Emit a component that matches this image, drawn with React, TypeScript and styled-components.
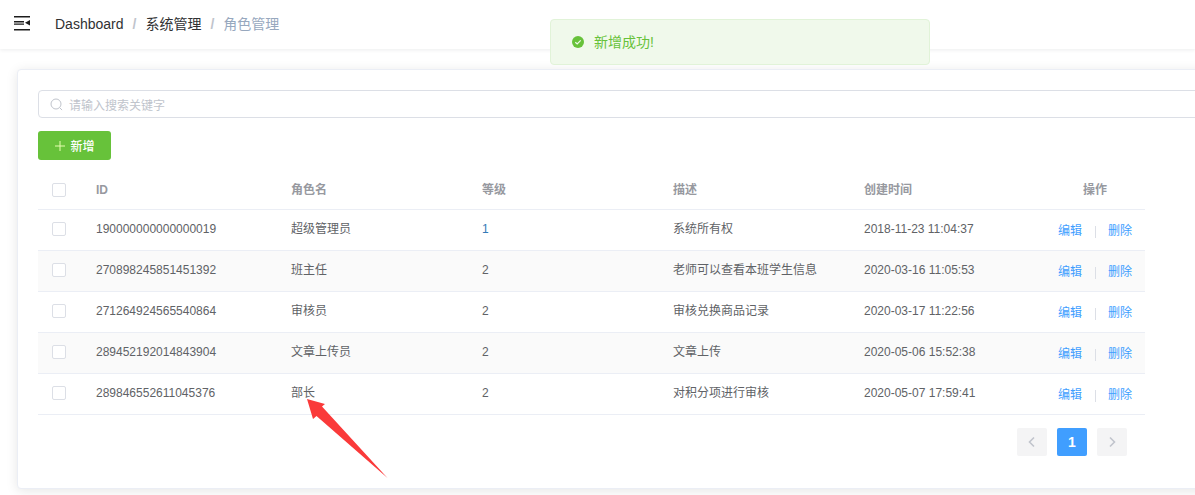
import React from 'react';
import styled, { createGlobalStyle } from 'styled-components';

const Global = createGlobalStyle`
  html, body { margin: 0; padding: 0; background: #fff; overflow: hidden; }
  body { font-family: "Liberation Sans", "Noto Sans CJK SC", sans-serif; width: 1195px; height: 495px; }
  * { box-sizing: border-box; }
`;

const Page = styled.div`
  position: relative;
  width: 1195px;
  height: 495px;
  overflow: hidden;
`;

const Navbar = styled.header`
  height: 49px;
  display: flex;
  align-items: center;
  padding-left: 14px;
  background: #fff;
  box-shadow: 0 1px 4px rgba(0, 21, 41, 0.08);
`;

const Hamburger = styled.svg`
  width: 16px;
  height: 16px;
  margin-right: 25px;
  margin-top: -1px;
  flex: none;
`;

const Crumbs = styled.nav`
  display: flex;
  align-items: center;
  font-size: 14px;
  line-height: 1;
  margin-top: -1px;
`;

const Crumb = styled.span<{ $last?: boolean }>`
  color: ${(p) => (p.$last ? '#97a8be' : '#303133')};
`;

const Sep = styled.span`
  color: #c0c4cc;
  margin: 0 9px;
  font-weight: 700;
`;

const Main = styled.main`
  padding: 21px 0 0 18px;
`;

const Card = styled.section`
  width: 1300px;
  height: 420px;
  padding: 20px;
  background: #fff;
  border: 1px solid #ebeef5;
  border-radius: 4px;
  box-shadow: 0 2px 12px rgba(0, 0, 0, 0.1);
  margin-left: -1px;
  margin-top: -1px;
`;

const Search = styled.div`
  height: 28px;
  display: flex;
  align-items: center;
  gap: 6px;
  padding-left: 11px;
  border: 1px solid #dcdfe6;
  border-radius: 4px;
  font-size: 12px;
  color: #c0c4cc;
`;

const AddButton = styled.button`
  display: flex;
  align-items: center;
  justify-content: center;
  gap: 4px;
  width: 73px;
  height: 29px;
  margin-top: 13px;
  border: 0;
  padding: 0;
  border-radius: 3px;
  background: #67c23a;
  color: #fff;
  font: 500 12px "Liberation Sans", "Noto Sans CJK SC", sans-serif;
`;

const Table = styled.div`
  width: 1107px;
  margin-top: 10px;
`;

const Row = styled.div<{ $striped?: boolean }>`
  display: grid;
  grid-template-columns: 48px 195px 191px 191px 191px 191px 100px;
  align-items: center;
  height: 41px;
  border-bottom: 1px solid #ebeef5;
  background: ${(p) => (p.$striped ? '#fafafa' : '#fff')};
  font-size: 12px;
  line-height: 16px;
  color: #606266;
`;

const HeadRow = styled(Row)`
  height: 40px;
  font-weight: 700;
  color: #97999f;
`;

const HeadCell = styled.div<{ $center?: boolean }>`
  padding: 0 10px;
  text-align: ${(p) => (p.$center ? 'center' : 'left')};
`;

const Cell = styled.div<{ $link?: boolean }>`
  padding: 0 10px;
  margin-top: -3px;
  white-space: nowrap;
  color: ${(p) => (p.$link ? '#337ab7' : 'inherit')};
`;

const CheckCell = styled.div<{ $raised?: boolean }>`
  display: flex;
  padding-left: 14px;
  margin-top: ${(p) => (p.$raised ? '-2px' : '0')};
`;

const Check = styled.span`
  width: 14px;
  height: 14px;
  border: 1px solid #dcdfe6;
  border-radius: 2px;
  background: #fff;
`;

const Actions = styled.div`
  display: flex;
  align-items: center;
  padding-left: 13px;
  margin-top: 2px;
  color: #409eff;
`;

const Divider = styled.span`
  width: 1px;
  height: 12px;
  background: #dcdfe6;
  margin: 2px 12px 0 13px;
`;

const Pager = styled.div`
  display: flex;
  gap: 10px;
  width: 1089px;
  justify-content: flex-end;
  margin-top: 13px;
`;

const PageButton = styled.div<{ $active?: boolean }>`
  width: 30px;
  height: 28px;
  display: flex;
  align-items: center;
  justify-content: center;
  border-radius: 2px;
  background: ${(p) => (p.$active ? '#409eff' : '#f4f4f5')};
  color: ${(p) => (p.$active ? '#fff' : '#c0c4cc')};
  font-size: 14px;
  font-weight: 700;
`;

const Toast = styled.div`
  position: absolute;
  left: 550px;
  top: 19px;
  width: 380px;
  height: 46px;
  display: flex;
  align-items: center;
  gap: 10px;
  padding-left: 21px;
  background: #f0f9eb;
  border: 1px solid #e1f3d8;
  border-radius: 4px;
  color: #67c23a;
  font-size: 14px;
  line-height: 18px;
`;

const Arrow = styled.svg`
  position: absolute;
  left: 300px;
  top: 395px;
  width: 95px;
  height: 90px;
`;

const rows = [
  ['190000000000000019', '超级管理员', '1', '系统所有权', '2018-11-23 11:04:37'],
  ['270898245851451392', '班主任', '2', '老师可以查看本班学生信息', '2020-03-16 11:05:53'],
  ['271264924565540864', '审核员', '2', '审核兑换商品记录', '2020-03-17 11:22:56'],
  ['289452192014843904', '文章上传员', '2', '文章上传', '2020-05-06 15:52:38'],
  ['289846552611045376', '部长', '2', '对积分项进行审核', '2020-05-07 17:59:41'],
];

export default function App() {
  return (
    <Page>
      <Global />
      <Navbar>
        <Hamburger viewBox="0 0 16 16">
          <path d="M0 0h16v1.4H0zM0 5h10v1.4H0zM0 7.4h10v1.4H0zM0 13h16v1.4H0z" fill="#1c1c1c" />
          <path d="M16 4v5.6l-5-2.8z" fill="#1c1c1c" />
        </Hamburger>
        <Crumbs>
          <Crumb>Dashboard</Crumb>
          <Sep>/</Sep>
          <Crumb>系统管理</Crumb>
          <Sep>/</Sep>
          <Crumb $last>角色管理</Crumb>
        </Crumbs>
      </Navbar>
      <Main>
        <Card>
          <Search>
            <svg width="13" height="13" viewBox="0 0 13 13" fill="none" stroke="#c0c4cc" strokeWidth="1">
              <circle cx="6" cy="6" r="5" />
              <path d="M9.7 9.7l2.4 2.4" />
            </svg>
            请输入搜索关键字
          </Search>
          <AddButton>
            <svg width="12" height="12" viewBox="0 0 12 12" stroke="#e6ffb0" strokeWidth="1">
              <path d="M6 1v10M1 6h10" />
            </svg>
            新增
          </AddButton>
          <Table>
            <HeadRow>
              <CheckCell><Check /></CheckCell>
              <HeadCell>ID</HeadCell>
              <HeadCell>角色名</HeadCell>
              <HeadCell>等级</HeadCell>
              <HeadCell>描述</HeadCell>
              <HeadCell>创建时间</HeadCell>
              <HeadCell $center>操作</HeadCell>
            </HeadRow>
            {rows.map((r, i) => (
              <Row key={r[0]} $striped={i % 2 === 1}>
                <CheckCell $raised><Check /></CheckCell>
                <Cell>{r[0]}</Cell>
                <Cell>{r[1]}</Cell>
                <Cell $link={i === 0}>{r[2]}</Cell>
                <Cell>{r[3]}</Cell>
                <Cell>{r[4]}</Cell>
                <Actions>
                  编辑
                  <Divider />
                  删除
                </Actions>
              </Row>
            ))}
          </Table>
          <Pager>
            <PageButton>
              <svg width="12" height="12" viewBox="0 0 12 12" fill="none" stroke="#c0c4cc" strokeWidth="1.6">
                <path d="M8 1.5L3.5 6 8 10.5" />
              </svg>
            </PageButton>
            <PageButton $active>1</PageButton>
            <PageButton>
              <svg width="12" height="12" viewBox="0 0 12 12" fill="none" stroke="#c0c4cc" strokeWidth="1.6">
                <path d="M4 1.5L8.5 6 4 10.5" />
              </svg>
            </PageButton>
          </Pager>
        </Card>
      </Main>
      <Toast>
        <svg width="12" height="12" viewBox="0 0 12 12">
          <circle cx="6" cy="6" r="6" fill="#67c23a" />
          <path d="M3.3 6.2l1.9 1.8 3.5-3.6" fill="none" stroke="#f0f9eb" strokeWidth="1.2" />
        </svg>
        <span>新增成功!</span>
      </Toast>
      <Arrow viewBox="0 0 95 90">
        <path d="M7 4L25 9 22 11.5 87.5 83 16.5 21 13 24z" fill="#fa3a3a" />
      </Arrow>
    </Page>
  );
}
